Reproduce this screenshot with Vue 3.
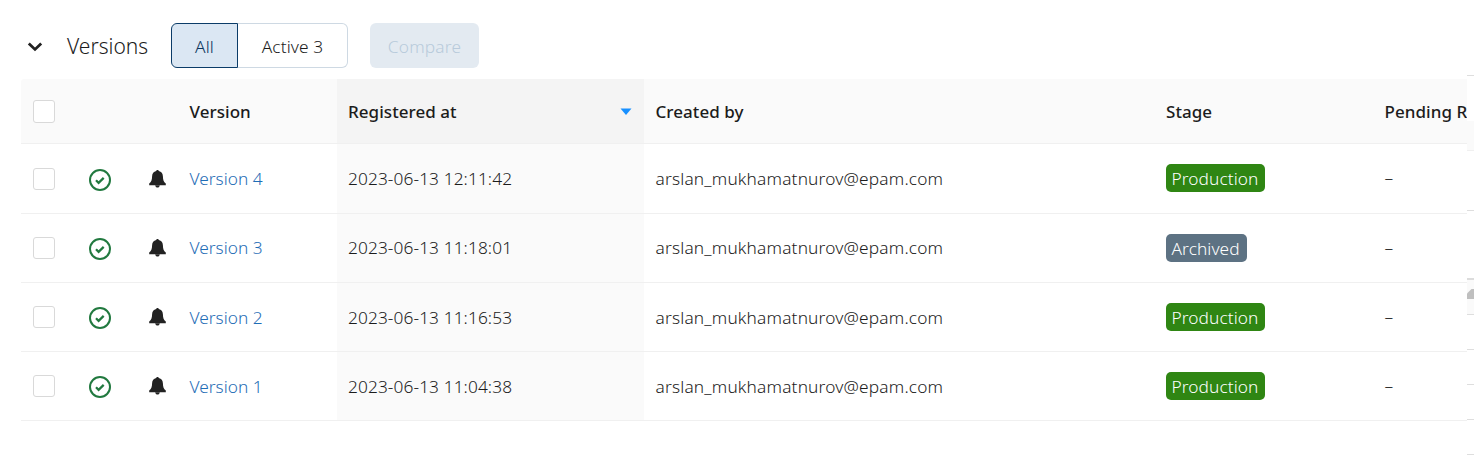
<script setup>
const rows = [
  { version: 4, date: '2023-06-13 12:11:42', stage: 'Production' },
  { version: 3, date: '2023-06-13 11:18:01', stage: 'Archived' },
  { version: 2, date: '2023-06-13 11:16:53', stage: 'Production' },
  { version: 1, date: '2023-06-13 11:04:38', stage: 'Production' },
]
const author = 'arslan_mukhamatnurov@epam.com'
</script>

<template>
  <div class="page">
    <main class="main">
      <header class="toolbar">
        <svg class="chevron" viewBox="0 0 16 10" width="16" height="10">
          <path d="M1.8 1.5 8 7.4l6.2-5.9" fill="none" stroke="#222" stroke-width="2.8" />
        </svg>
        <h2 class="title">Versions</h2>
        <div class="group">
          <button class="seg on">All</button>
          <button class="seg">Active 3</button>
        </div>
        <button class="compare">Compare</button>
      </header>

      <section class="table">
        <div class="row head">
          <div class="cell c-check"><i class="box"></i></div>
          <div class="cell c-status"></div>
          <div class="cell c-bell"></div>
          <div class="cell c-version"><span>Version</span></div>
          <div class="cell c-date">
            <span>Registered at</span>
            <svg class="sort" viewBox="0 0 12 8" width="12" height="8"><path d="M.5.5h11L6 7z" fill="#1890ff" /></svg>
          </div>
          <div class="cell c-author"><span>Created by</span></div>
          <div class="cell c-stage"><span>Stage</span></div>
          <div class="cell c-pending"><span>Pending R</span></div>
        </div>
        <div v-for="r in rows" :key="r.version" class="row" :class="{ low: r.version < 3 }">
          <div class="cell c-check"><i class="box"></i></div>
          <div class="cell c-status">
            <svg class="ok" viewBox="0 0 22 22" width="22" height="22" fill="none" stroke="#21793f" stroke-width="2">
              <circle cx="11" cy="11" r="10" />
              <path d="m7 11.3 2.6 2.6 5.1-5" stroke-width="2.2" />
            </svg>
          </div>
          <div class="cell c-bell">
            <svg class="bell" viewBox="0 0 17 18" width="17" height="18">
              <path d="M8.5 0c.8 0 1.200.5 1.300 1.100 2.600.6 4 2.500 4.100 5.200.1 4 .8 5.800 2.900 7.300V15.300H.2v-1.700C2.300 12.100 3 10.300 3.100 6.300c.1-2.700 1.500-4.600 4.100-5.200C7.300.5 7.700 0 8.500 0z" fill="#222" />
              <path d="M6.200 15.300h4.600c-.2 1.500-1.100 2.300-2.300 2.300s-2.100-.8-2.300-2.300z" fill="#222" />
            </svg>
          </div>
          <div class="cell c-version"><a class="txt link">Version {{ r.version }}</a></div>
          <div class="cell c-date"><span class="txt date">{{ r.date }}</span></div>
          <div class="cell c-author"><span class="txt author">{{ author }}</span></div>
          <div class="cell c-stage"><span class="tag" :class="r.stage.toLowerCase()">{{ r.stage }}</span></div>
          <div class="cell c-pending"><span>–</span></div>
        </div>
      </section>
    </main>

    <aside class="edge">
      <div class="e-top"></div>
      <div class="e-gap"></div>
      <div class="e-shade"></div>
      <div class="e-block"></div>
      <div class="e-space"></div>
      <div class="e-head">
        <svg viewBox="0 0 7 10" width="7" height="10"><path d="M0 4.500 4.500 0H7v10H0z" fill="#bfbfbf" /></svg>
      </div>
      <div v-for="n in 4" :key="n" class="e-row"></div>
    </aside>
  </div>
</template>

<style>
body {
  background: #fff;
  overflow: hidden;
}
</style>

<style scoped>
.page {
  display: flex;
  width: 1474px;
  height: 472px;
  overflow: hidden;
  font-family: "Noto Sans", "Open Sans", sans-serif;
  font-size: 17.300px;
  font-weight: 350;
  line-height: 24px;
  color: #1c1c1c;
}
.main {
  width: 1446px;
  padding-left: 21px;
  flex: none;
  overflow: hidden;
}
.toolbar {
  display: flex;
  align-items: center;
  height: 45px;
  padding: 23px 0 11px 6px;
}
.chevron {
  flex: none;
  margin-top: 2px;
}
.title {
  width: 104px;
  margin: 0 0 0 24px;
  font-size: 21px;
  font-weight: 350;
  white-space: nowrap;
}
button {
  box-sizing: border-box;
  height: 45px;
  padding: 2px 0 0;
  font: inherit;
  letter-spacing: 0.100px;
  color: inherit;
  background: #fff;
}
.group {
  display: flex;
}
.seg {
  width: 110px;
  border: 1px solid #ced9e3;
  border-left: 0;
  border-radius: 0 6px 6px 0;
}
.seg.on {
  width: 67px;
  color: #0c365d;
  background: #dbe7f3;
  border: 1px solid #0b3c68;
  border-radius: 6px 0 0 6px;
}
.compare {
  width: 109px;
  margin-left: 22px;
  letter-spacing: 0.200px;
  color: #b8cadb;
  background: #e3eaf1;
  border: 0;
  border-radius: 6px;
}
.row {
  display: flex;
  height: 68px;
  border-bottom: 1px solid #f0f0f0;
}
.row.head {
  height: 64px;
  font-size: 17px;
  font-weight: 500;
  letter-spacing: 0.050px;
  background: #fafafa;
  border-radius: 3px 0 0 0;
}
.head span {
  padding-top: 1px;
}
.head + .row {
  height: 69px;
}
.cell {
  display: flex;
  align-items: center;
  flex: none;
  box-sizing: border-box;
  padding-left: 11.500px;
  white-space: nowrap;
}
.cell.c-check {
  width: 56px;
  padding-left: 12px;
}
.c-status { width: 60px; }
.cell.c-bell { width: 41px; padding-left: 12px; }
.c-version { width: 159px; }
.c-date {
  width: 307px;
  padding-left: 11px;
  background: #fafafa;
  justify-content: space-between;
}
.head .c-date { background: #f4f4f4; }
.c-author { width: 510px; }
.c-stage { width: 219px; padding-left: 12px; }
.c-pending { width: 240px; }
.c-pending span { margin-bottom: 1px; }
.head .c-pending span { margin-bottom: 0; }
.low .txt { padding-top: 1px; }
.date { letter-spacing: 0.100px; }
.author { letter-spacing: 0.180px; }
.box {
  box-sizing: border-box;
  width: 22px;
  height: 22px;
  background: #fff;
  border: 1px solid #d9d9d9;
  border-radius: 3px;
}
.head .box { height: 23px; }
.sort { margin: 2px 12.500px 0 0; }
.ok { margin-top: 2px; }
.link { color: #1f6db6; }
.tag {
  box-sizing: border-box;
  height: 28px;
  line-height: 28px;
  padding: 1px 0 0 5.500px;
  margin-bottom: 1px;
  letter-spacing: 0.080px;
  color: #fff;
  border-radius: 5px;
}
.tag.production { width: 99px; }
.tag.archived { width: 81px; }
.production { background: #2f8613; }
.archived { background: #5d7283; }
.edge {
  width: 7px;
  flex: none;
}
.edge div {
  box-sizing: border-box;
}
.e-top { height: 76px; border-bottom: 1px solid #dedede; }
.e-gap { height: 45px; }
.e-shade { height: 30px; background: #fafafa; border-bottom: 1px solid #f0f0f0; }
.e-block { height: 60px; border-bottom: 1px solid #dedede; }
.e-space { height: 67px; }
.e-head {
  height: 37px;
  padding-top: 9px;
  background: #fafafa;
  border-top: 2px solid #dcdcdc;
  border-bottom: 1px solid #dedede;
}
.e-head svg { display: block; }
.e-row { height: 35px; border-bottom: 1px solid #dedede; }
</style>
